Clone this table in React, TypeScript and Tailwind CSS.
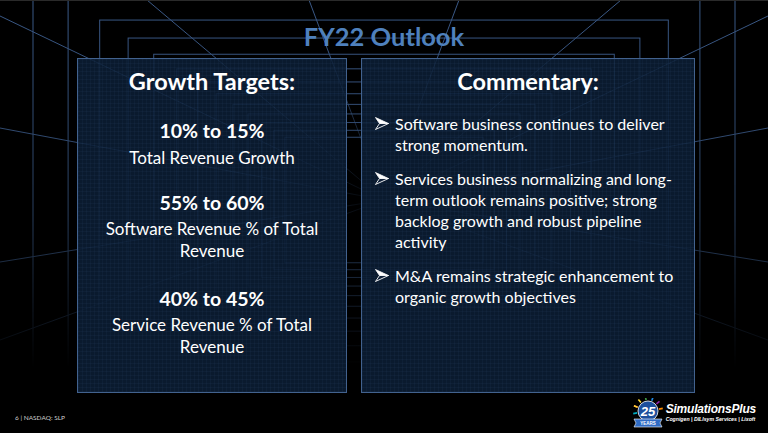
import React from "react";

const VX = 384;
const VY = 200;

// perspective tunnel behind the slide
function TunnelGrid() {
  const frames = Array.from({ length: 13 }, (_, i) => {
    const hw = 351 * Math.pow(0.9, i);
    const hh = hw / 1.58;
    return { x: VX - hw, y: VY - hh, w: hw * 2, h: hh * 2 };
  });
  const rays: [number, number][] = [
    [147, 0], [309, 0], [459, 0], [621, 0],
    [0, 16], [0, 128], [0, 262], [0, 340],
    [768, 16], [768, 128], [768, 262], [768, 340],
  ];
  return (
    <svg className="absolute inset-0" width="768" height="433" viewBox="0 0 768 433">
      <defs>
        <linearGradient id="fade" x1="0" y1="0" x2="0" y2="433" gradientUnits="userSpaceOnUse">
          <stop offset="0" stopColor="#fff" />
          <stop offset="0.5" stopColor="#fff" stopOpacity="0.7" />
          <stop offset="0.85" stopColor="#fff" stopOpacity="0" />
        </linearGradient>
        <radialGradient id="hole" cx={VX} cy={VY} r="150" gradientUnits="userSpaceOnUse">
          <stop offset="0" stopColor="#000" />
          <stop offset="1" stopColor="#fff" />
        </radialGradient>
        <mask id="fadeMask">
          <rect width="768" height="433" fill="url(#fade)" />
        </mask>
        <mask id="holeMask">
          <rect width="768" height="433" fill="url(#hole)" />
        </mask>
      </defs>
      <g mask="url(#fadeMask)" stroke="#3b5a88" strokeWidth="1" fill="none">
        {frames.map((f, i) => (
          <rect key={i} x={f.x} y={f.y} width={f.w} height={f.h} />
        ))}
        <g mask="url(#holeMask)">
          {rays.map(([x, y], i) => (
            <line key={i} x1={x} y1={y} x2={VX} y2={VY} />
          ))}
        </g>
      </g>
      <line x1="0" y1="0.5" x2="768" y2="0.5" stroke="#2a2a2a" />
    </svg>
  );
}

function Arrow() {
  return (
    <svg width="14" height="13" viewBox="0 0 14 13" className="shrink-0">
      <polygon points="0.5,0.5 13.5,6.5 4.5,6.5" fill="#ffffff" stroke="#ffffff" strokeWidth="0.8" strokeLinejoin="round" />
      <polygon points="0.5,12.5 13.5,6.5 4.5,6.5" fill="#0f2038" stroke="#ffffff" strokeWidth="0.9" strokeLinejoin="round" />
    </svg>
  );
}

function Target({ value, label, className }: { value: string; label: React.ReactNode; className: string }) {
  return (
    <div className={`flex flex-col items-center text-center ${className}`}>
      <div className="text-[19.5px] font-bold leading-[1.2]">{value}</div>
      <div className="mt-[4px] text-[17px] leading-[22px]">{label}</div>
    </div>
  );
}

function Bullet({ children }: { children: React.ReactNode }) {
  return (
    <div className="flex">
      <div className="w-[33px] pl-[13px] pt-[4px]">
        <Arrow />
      </div>
      <div className="whitespace-nowrap text-[16px] leading-[21px]">{children}</div>
    </div>
  );
}

function AnniversaryBadge() {
  const rays = [
    { a: -160, c: "#e53935" }, { a: -130, c: "#fdd835" }, { a: -100, c: "#43a047" },
    { a: -70, c: "#1e88e5" }, { a: -40, c: "#8e24aa" }, { a: -10, c: "#fb8c00" },
    { a: 170, c: "#00acc1" }, { a: 200, c: "#fdd835" },
  ];
  return (
    <svg width="34" height="30" viewBox="0 0 34 30">
      {rays.map((r, i) => {
        const rad = (r.a * Math.PI) / 180;
        return (
          <line
            key={i}
            x1={17 + Math.cos(rad) * 11}
            y1={13 + Math.sin(rad) * 11}
            x2={17 + Math.cos(rad) * 15}
            y2={13 + Math.sin(rad) * 15}
            stroke={r.c}
            strokeWidth="1.6"
          />
        );
      })}
      <circle cx="17" cy="13" r="10" fill="#1c4f9c" stroke="#ffffff" strokeWidth="0.8" />
      <text x="17" y="18" textAnchor="middle" fontFamily="Liberation Sans, sans-serif" fontWeight="700" fontStyle="italic" fontSize="13" fill="#ffffff">
        25
      </text>
      <path d="M3 21 L31 21 L29 25 L31 29 L3 29 L5 25 Z" fill="#2f6bc4" stroke="#ffffff" strokeWidth="0.6" />
      <text x="17" y="27.3" textAnchor="middle" fontFamily="Liberation Sans, sans-serif" fontWeight="700" fontSize="4.5" fill="#ffffff">
        YEARS
      </text>
    </svg>
  );
}

function Panel({ title, className, children }: { title: string; className: string; children: React.ReactNode }) {
  return (
    <div
      className={`flex flex-col border border-[#42628e] bg-[rgba(12,30,54,0.86)] bg-[linear-gradient(rgba(90,130,180,0.06)_1px,transparent_1px),linear-gradient(90deg,rgba(90,130,180,0.06)_1px,transparent_1px)] bg-[size:4px_4px] pt-[8px] ${className}`}
    >
      <div className="text-center text-[23.5px] font-bold leading-[1.2]">{title}</div>
      {children}
    </div>
  );
}

export default function App() {
  return (
    <div className="relative h-[433px] w-[768px] overflow-hidden bg-black font-['Lato',sans-serif] text-white">
      <TunnelGrid />
      <div className="relative flex h-full flex-col">
        <div className="flex h-[58px] items-center justify-center pt-[14px]">
          <h1 className="text-[25.5px] font-bold leading-[1.2] text-[#4f81bd]">FY22 Outlook</h1>
        </div>

        <div className="flex h-[335px] gap-[14px] pl-[77px]">
          <Panel title="Growth Targets:" className="w-[270px]">
            <div className="mt-[24px] flex flex-col">
              <Target value="10% to 15%" label="Total Revenue Growth" className="" />
              <Target
                className="mt-[22px]"
                value="55% to 60%"
                label={
                  <>
                    Software Revenue % of Total
                    <br />
                    Revenue
                  </>
                }
              />
              <Target
                className="mt-[25px]"
                value="40% to 45%"
                label={
                  <>
                    Service Revenue % of Total
                    <br />
                    Revenue
                  </>
                }
              />
            </div>
          </Panel>

          <Panel title="Commentary:" className="w-[334px]">
            <div className="mt-[18px] flex flex-col gap-[13px]">
              <Bullet>
                Software business continues to deliver
                <br />
                strong momentum.
              </Bullet>
              <Bullet>
                Services business normalizing and long-
                <br />
                term outlook remains positive; strong
                <br />
                backlog growth and robust pipeline
                <br />
                activity
              </Bullet>
              <Bullet>
                M&amp;A remains strategic enhancement to
                <br />
                organic growth objectives
              </Bullet>
            </div>
          </Panel>
        </div>

        <div className="flex flex-1 items-end justify-between pb-[5px] pl-[15px] pr-[12px]">
          <div className="mb-[5px] text-[6.5px] text-[#cfcfcf]">6 | NASDAQ: SLP</div>
          <div className="flex items-center gap-[1px]">
            <AnniversaryBadge />
            <div className="flex flex-col">
              <div className="font-['Liberation_Sans',sans-serif] text-[12px] font-bold italic leading-none tracking-[-0.2px]">
                SimulationsPlus
              </div>
              <div className="mt-[2px] font-['Liberation_Sans',sans-serif] text-[5.2px] font-bold italic leading-none">
                Cognigen | DILIsym Services | Lixoft
              </div>
            </div>
          </div>
        </div>
      </div>
    </div>
  );
}
